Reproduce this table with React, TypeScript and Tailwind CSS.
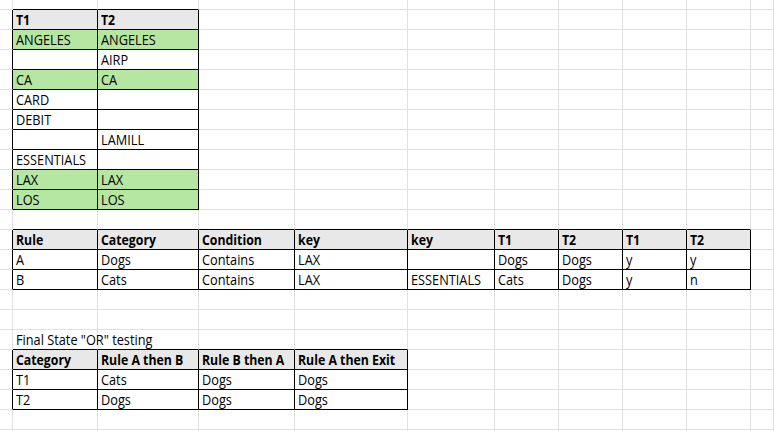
import React from 'react';

type Cell = { text: string; bold?: boolean; fill?: 'head' | 'green' };

// column widths include the 1px gridline on the right
const COLS = 11;
const ROWS = 23;

const tables = [
    { r0: 1, r1: 10, c0: 1, c1: 2 },
    { r0: 12, r1: 14, c0: 1, c1: 9 },
    { r0: 18, r1: 20, c0: 1, c1: 4 },
];

const cells: Record<string, Cell> = {};

function put(r: number, c: number, values: string[], opts: Omit<Cell, 'text'> = {}) {
    values.forEach((v, i) => {
        cells[`${r},${c + i}`] = { text: v, ...opts };
    });
}

put(1, 1, ['T1', 'T2'], { bold: true, fill: 'head' });
put(2, 1, ['ANGELES', 'ANGELES'], { fill: 'green' });
put(3, 1, ['', 'AIRP']);
put(4, 1, ['CA', 'CA'], { fill: 'green' });
put(5, 1, ['CARD', '']);
put(6, 1, ['DEBIT', '']);
put(7, 1, ['', 'LAMILL']);
put(8, 1, ['ESSENTIALS', '']);
put(9, 1, ['LAX', 'LAX'], { fill: 'green' });
put(10, 1, ['LOS', 'LOS'], { fill: 'green' });

put(12, 1, ['Rule', 'Category', 'Condition', 'key', 'key', 'T1', 'T2', 'T1', 'T2'], { bold: true, fill: 'head' });
put(13, 1, ['A', 'Dogs', 'Contains', 'LAX', '', 'Dogs', 'Dogs', 'y', 'y']);
put(14, 1, ['B', 'Cats', 'Contains', 'LAX', 'ESSENTIALS', 'Cats', 'Dogs', 'y', 'n']);

put(17, 1, ['Final State "OR" testing']);
put(18, 1, ['Category', 'Rule A then B', 'Rule B then A', 'Rule A then Exit'], { bold: true, fill: 'head' });
put(19, 1, ['T1', 'Cats', 'Dogs', 'Dogs']);
put(20, 1, ['T2', 'Dogs', 'Dogs', 'Dogs']);

const inTable = (r: number, c: number) =>
    tables.some((t) => r >= t.r0 && r <= t.r1 && c >= t.c0 && c <= t.c1);

function SheetCell({ r, c }: { r: number; c: number }) {
    const cell = cells[`${r},${c}`];
    const blackRight = inTable(r, c) || inTable(r, c + 1);
    const blackBottom = inTable(r, c) || inTable(r + 1, c);

    return (
        <div
            className={`relative border-r border-b ${r === 0 ? 'h-[10px]' : 'h-5'} ${
                blackRight ? 'border-r-black' : 'border-r-[#e1e1e1]'
            } ${blackBottom ? 'border-b-black' : 'border-b-[#e1e1e1]'} ${
                cell?.fill === 'head' ? 'bg-[#e8e8e8]' : cell?.fill === 'green' ? 'bg-[#b5e6a2]' : 'bg-white'
            }`}
        >
            {cell?.text && (
                // narrow sheet font: Open Sans squeezed sideways
                <span
                    className={`absolute left-[3px] top-0 z-10 origin-left whitespace-nowrap text-[15px] leading-[19px] text-black ${
                        cell.bold ? 'font-bold scale-x-[0.82]' : 'font-normal scale-x-[0.85]'
                    }`}
                >
                    {cell.text}
                </span>
            )}
        </div>
    );
}

export default function App() {
    return (
        <div
            className="w-[774px] h-[431px] overflow-hidden bg-white"
            style={{ fontFamily: '"Open Sans", "Liberation Sans", sans-serif' }}
        >
            <div className="grid grid-cols-[13px_85px_101px_96px_113px_87px_64px_64px_64px_64px_1fr]">
                {Array.from({ length: ROWS }).map((_, r) =>
                    Array.from({ length: COLS }).map((_, c) => <SheetCell key={`${r}-${c}`} r={r} c={c} />)
                )}
            </div>
        </div>
    );
}
